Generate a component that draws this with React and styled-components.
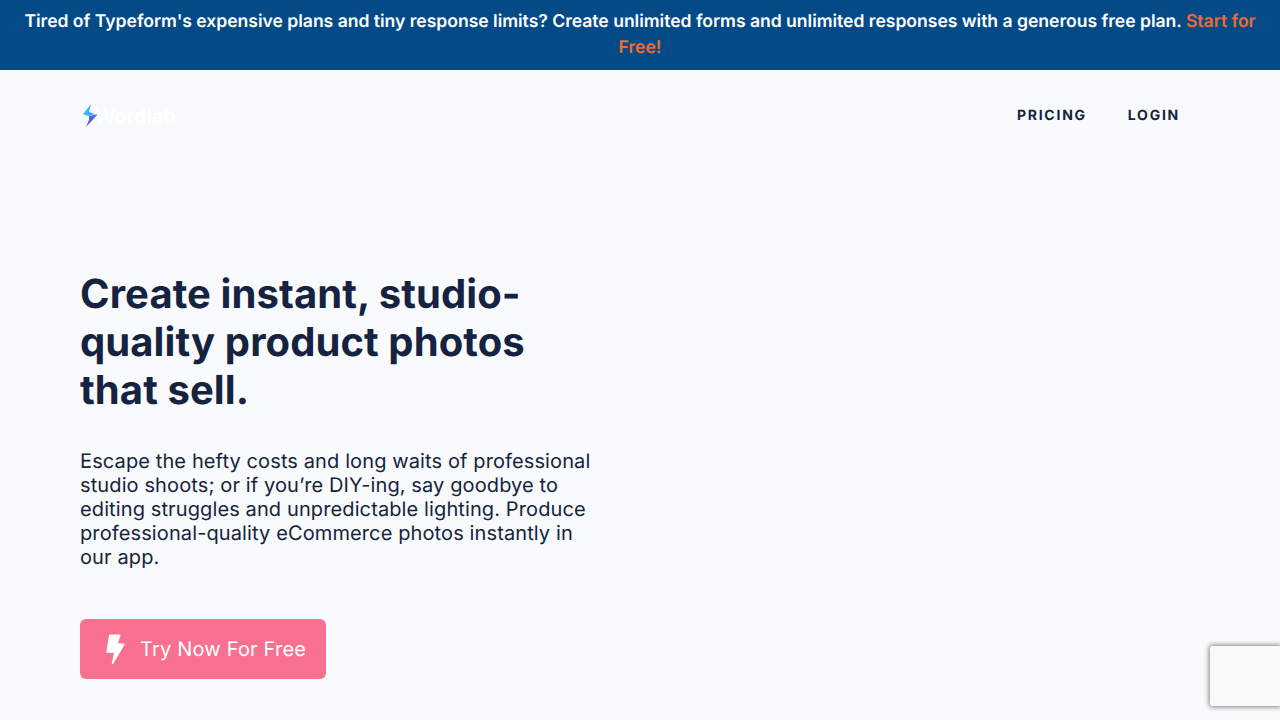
import styled, { createGlobalStyle } from 'styled-components';

const GlobalStyle = createGlobalStyle`
  html, body {
    margin: 0;
    padding: 0;
    height: 720px;
    overflow: hidden;
    background: #f9fafc;
    font-family: Inter, "Liberation Sans", sans-serif;
    text-rendering: geometricPrecision;
    color: #152340;
  }
`;

const Banner = styled.div`
  background: #034a87;
  color: #fff;
  font-size: 17.6px;
  font-weight: 600;
  letter-spacing: -0.03px;
  line-height: 26px;
  padding: 9px 24px;
  text-align: center;
  height: 52px;
`;

const BannerLink = styled.a`
  color: #f26a2e;
`;

const Nav = styled.nav`
  height: 90px;
  padding: 0 100px 0 80px;
  display: flex;
  align-items: center;
  justify-content: space-between;
`;

const Logo = styled.div`
  display: flex;
  align-items: center;
  color: #fff;
  font-size: 20px;
  font-weight: 600;
`;

const LogoText = styled.span`
  margin: 1px 0 0 -3px;
`;

const NavLinks = styled.div`
  display: flex;
  gap: 41px;
  padding-top: 2px;
`;

const NavLink = styled.a`
  font-size: 14px;
  font-weight: 700;
  letter-spacing: 1.75px;
  line-height: 20px;
  color: #152340;
`;

const Hero = styled.section`
  padding: 110px 0 0 80px;
  width: 520px;
`;

const Title = styled.h1`
  margin: 0 0 35px;
  font-size: 40px;
  font-weight: 700;
  letter-spacing: 0.09px;
  line-height: 48px;
  color: #152340;
`;

const Lead = styled.p`
  margin: 0 0 50px;
  font-size: 20px;
  letter-spacing: 0.115px;
  line-height: 24px;
  color: #152340;
`;

const Cta = styled.a`
  display: inline-flex;
  align-items: center;
  gap: 14px;
  height: 60px;
  padding: 0 20px 0 24px;
  box-sizing: border-box;
  background: #f97191;
  border-radius: 6px;
  color: #fff;
  font-size: 20px;
  letter-spacing: 0.19px;
`;

const Badge = styled.div`
  position: absolute;
  right: 0;
  top: 646px;
  width: 70px;
  height: 60px;
  background: #f9f9f9;
  border-radius: 2px 0 0 2px;
  box-shadow: 0 0 5px 1px #808080;
`;

const LogoMark = () => (
  <svg width="18" height="24" viewBox="0 0 18 24">
    <defs>
      <linearGradient id="boltTop" x1="0" y1="0" x2="1" y2="1">
        <stop offset="0" stopColor="#3fd0f5" />
        <stop offset="1" stopColor="#23a6f0" />
      </linearGradient>
      <linearGradient id="boltBottom" x1="1" y1="0" x2="0" y2="1">
        <stop offset="0" stopColor="#4a7bf0" />
        <stop offset="1" stopColor="#5a4bd8" />
      </linearGradient>
    </defs>
    <path d="M11 1 L3 11 L8 13 L15 11 L9 9 Z" fill="url(#boltTop)" />
    <path d="M9 13 L18 11 L6 24 L9 17 Z" fill="url(#boltBottom)" />
  </svg>
);

const BoltIcon = () => (
  <svg width="22" height="32" viewBox="0 0 22 32" fill="#fff">
    <path d="M5 2.4 C5.1 1.8 5.5 1.4 6.1 1.4 L15.6 1.4 C16.3 1.4 16.7 2 16.5 2.6 L13.9 10.3 L19.6 10.6 C20.4 10.6 20.8 11.4 20.4 12 L9.4 30.6 C8.8 31.5 7.5 31 7.8 30 L10 20 L3.3 19.8 C2.7 19.8 2.3 19.3 2.4 18.7 Z" />
  </svg>
);

export default function App() {
  return (
    <>
      <GlobalStyle />
      <Banner>
        Tired of Typeform's expensive plans and tiny response limits? Create unlimited forms and unlimited responses with a generous free plan.{' '}
        <BannerLink>Start for Free!</BannerLink>
      </Banner>
      <Nav>
        <Logo>
          <LogoMark />
          <LogoText>Wordlab</LogoText>
        </Logo>
        <NavLinks>
          <NavLink>PRICING</NavLink>
          <NavLink>LOGIN</NavLink>
        </NavLinks>
      </Nav>
      <Hero>
        <Title>Create instant, studio-quality product photos that sell.</Title>
        <Lead>
          Escape the hefty costs and long waits of professional studio shoots; or if you’re DIY-ing, say goodbye to editing struggles and unpredictable lighting. Produce professional-quality eCommerce photos instantly in our app.
        </Lead>
        <Cta>
          <BoltIcon />
          Try Now For Free
        </Cta>
      </Hero>
      <Badge />
    </>
  );
}
